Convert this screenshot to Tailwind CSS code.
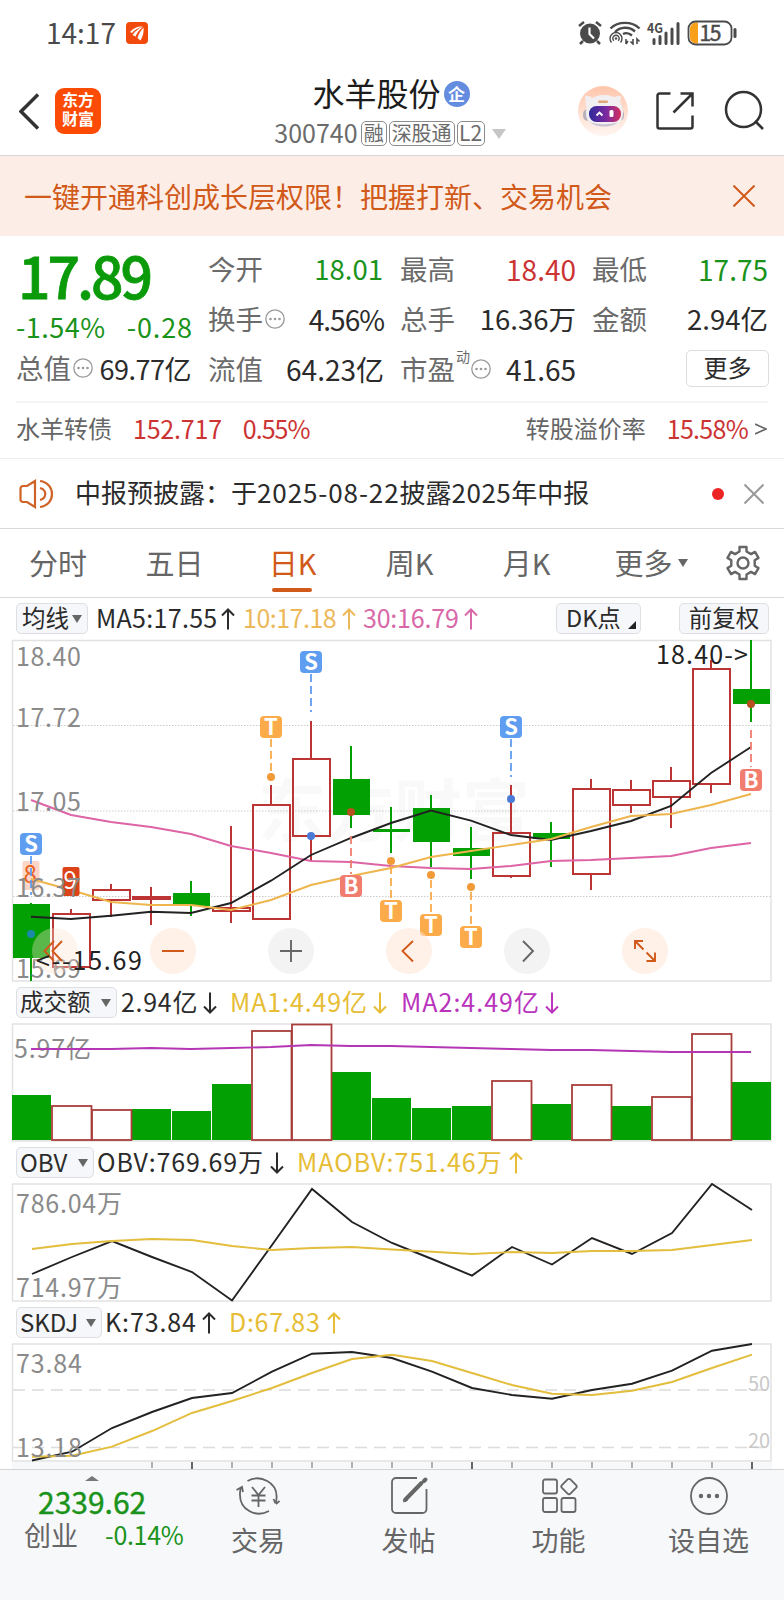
<!DOCTYPE html>
<html lang="zh-CN">
<head>
    <meta charset="UTF-8">
    <meta name="viewport" content="width=device-width, initial-scale=1.0">
    <title>水羊股份 300740</title>
    <script src="https://cdn.jsdelivr.net/npm/@tailwindcss/browser@4"></script>
</head>
<body class="w-[784px] h-[1600px] overflow-hidden bg-white text-[#2b2b2b] leading-none font-['Noto_Sans_CJK_SC',sans-serif] whitespace-nowrap">

    <!-- Shared icons -->
    <svg class="hidden">
        <symbol id="up" viewBox="0 0 14 22"><path d="M7 21.5V1.5M1 7.5l6-6 6 6" fill="none" stroke="currentColor" stroke-width="2"/></symbol>
        <symbol id="down" viewBox="0 0 14 22"><path d="M7 .5v20M1 14.500l6 6 6-6" fill="none" stroke="currentColor" stroke-width="2"/></symbol>
        <symbol id="caret" viewBox="0 0 10 8"><path d="M0 0h10L5 8z" fill="currentColor"/></symbol>
        <symbol id="more" viewBox="0 0 20 20"><circle cx="10" cy="10" r="9.200" fill="none" stroke="currentColor" stroke-width="1.300"/><g fill="currentColor"><circle cx="5.500" cy="10" r="1.300"/><circle cx="10" cy="10" r="1.300"/><circle cx="14.500" cy="10" r="1.300"/></g></symbol>
    </svg>

    <!-- Status bar -->
    <div class="flex items-center h-[66px] pl-[46px] pr-[47px] text-[#4a4a4a]">
        <span class="text-[28px] -mt-[2px]">14:17</span>
        <svg class="w-[22px] h-[22px] ml-[10px]" viewBox="0 0 22 22">
            <rect width="22" height="22" rx="4" fill="#f24a0c"/>
            <path d="M4 10C7 6 12 4 17 4.500 12 6 8 8 6 11zM6.500 13C9 9 13 6 17 5 13 8 11 11 9.500 14.500zM11.500 16C12.500 12 15 8 17.500 5.500c.6 4-.5 9-3 13z" fill="#fff"/>
        </svg>
        <svg class="w-[24px] h-[24px] ml-auto" viewBox="0 0 24 24">
            <circle cx="12" cy="12.500" r="10" fill="currentColor"/>
            <path d="M1 5l5-4M23 5l-5-4M5 20l-3 3M19 20l3 3" stroke="currentColor" stroke-width="2.500"/>
            <path d="M11.500 6.500v6.500l4.500 4.500" fill="none" stroke="#fff" stroke-width="2.200"/>
        </svg>
        <svg class="w-[32px] h-[24px] ml-[7px]" viewBox="0 0 32 24" fill="none" stroke="currentColor">
            <path d="M1.500 7.500C9 0 23 0 30.500 7.500M6 11c5-5 14-6 20-.5M14 13c3-1.500 6-1 9 1.500" stroke-width="2.400"/>
            <path d="M2.500 21.500a6 6 0 1 1 9 0M4.800 19.800a3.200 3.200 0 1 1 4.400 0" stroke-width="1.400"/>
            <circle cx="7" cy="17.500" r="1.200" fill="currentColor" stroke="none"/>
            <path d="M17 18v5M19 20l-2 3M24 18v5l-2.500-2.500M28 23v-5l2.500 2.500" stroke-width="1.600"/>
        </svg>
        <svg class="w-[34px] h-[24px] ml-[6px] overflow-visible" viewBox="0 0 34 24" fill="none" stroke="currentColor">
            <text x="0" y="11.500" font-size="13" font-weight="700" fill="currentColor" stroke="none" textLength="16" lengthAdjust="spacingAndGlyphs">4G</text>
            <path d="M7 18.500v4M13 15.500v7M19 12v10.500M25 8v14.500M31 2.500v20" stroke-width="3" stroke-linecap="round"/>
        </svg>
        <svg class="w-[50px] h-[26px] ml-[6px] overflow-visible" viewBox="0 0 50 26">
            <path d="M9 2.500h2v21H9a6 6 0 0 1-6-6v-9a6 6 0 0 1 6-6z" fill="#f9a01b"/>
            <rect x="1.500" y="1.500" width="43" height="23" rx="7" fill="none" stroke="#4a4a4a" stroke-width="1.800"/>
            <path d="M48 9.500v7" stroke="#4a4a4a" stroke-width="3" stroke-linecap="round"/>
            <text x="12.500" y="20.500" font-size="21" fill="#4a4a4a" stroke="#4a4a4a" stroke-width=".5" textLength="22">15</text>
        </svg>
    </div>

    <!-- Header -->
    <header class="flex items-center h-[90px] border-b border-[#d6d6d6]">
        <svg class="w-[20px] h-[38px] ml-[19px]" viewBox="0 0 20 38"><path d="M19 2.500L2 19.500l17 17" fill="none" stroke="#333" stroke-width="3.500"/></svg>
        <div class="flex flex-col items-center justify-center w-[46px] h-[46px] ml-[16px] rounded-[9px] bg-[#fb4b05] text-white text-[16px] font-bold leading-[19px] pb-[3px]">
            <span>东方</span>
            <span>财富</span>
        </div>
        <div class="flex flex-col items-center ml-[174px] w-[232px] pt-[7px]">
            <div class="flex items-center h-[39px] text-[#1c1c1c]">
                <span class="text-[32px] -mt-[4px]">水羊股份</span>
                <span class="flex items-center justify-center w-[26px] h-[26px] ml-[3px] pb-[2px] rounded-full bg-[#648de0] text-white text-[17px] font-bold">企</span>
            </div>
            <div class="flex items-center h-[40px] -ml-[2px] text-[#6b6b6b]">
                <span class="text-[25px] -mt-[3px]">300740</span>
                <span class="flex items-center h-[25px] px-[2px] pb-[2px] ml-[3px] border border-[#8c8c8c] rounded-[5px] text-[20px]">融</span>
                <span class="flex items-center h-[25px] px-[2px] pb-[2px] ml-[2px] border border-[#8c8c8c] rounded-[5px] text-[20px]">深股通</span>
                <span class="flex items-center justify-center w-[28px] h-[25px] pb-[2px] ml-[2px] border border-[#8c8c8c] rounded-[5px] text-[21px]">L2</span>
                <svg class="w-[14px] h-[10px] ml-[7px] text-[#c6c6c6]"><path d="M0 0h14L7 10z" fill="currentColor"/></svg>
            </div>
        </div>
        <svg class="w-[50px] h-[50px] ml-[71px]" viewBox="0 0 50 50">
            <defs>
                <linearGradient id="botBg" x1="0" y1="0" x2="0" y2="1"><stop offset="0" stop-color="#ffc5aa"/><stop offset="1" stop-color="#fff6f2"/></linearGradient>
                <linearGradient id="visor"><stop offset="0" stop-color="#2d2a9a"/><stop offset=".55" stop-color="#7c2aa0"/><stop offset="1" stop-color="#d5305c"/></linearGradient>
            </defs>
            <circle cx="25" cy="25" r="25" fill="url(#botBg)"/>
            <path d="M7 10c4-1 7 1 9 4l-8 7zM43 10c-4-1-7 1-9 4l8 7z" fill="#f2eef0"/>
            <rect x="5" y="23" width="41" height="12" rx="5" fill="#b8b0ba"/>
            <path d="M26 9c13 0 19 8 19 18s-8 14-19 14S8 37 8 27s5-18 18-18z" fill="#f1eff2"/>
            <path d="M12 36c6 6 22 6 28 0-5 3-23 3-28 0z" fill="#c9c3ce"/>
            <rect x="20" y="14.500" width="10" height="2.500" rx="1.200" fill="#e0a678"/>
            <rect x="11" y="20" width="32" height="16" rx="7.500" fill="url(#visor)"/>
            <path d="M18.500 29.500l3-3 3 3" fill="none" stroke="#fff" stroke-width="1.800"/>
            <rect x="31.500" y="24" width="4" height="7" rx="1.500" fill="#fff"/>
        </svg>
        <svg class="w-[40px] h-[40px] ml-[27px]" viewBox="0 0 40 40" fill="none" stroke="#333" stroke-width="2.500">
            <path d="M15.500 2.500H4.500a2 2 0 0 0-2 2v31a2 2 0 0 0 2 2h31a2 2 0 0 0 2-2V24.500M25.500 2.500h12v13M37 3L18.500 21.500"/>
        </svg>
        <svg class="w-[42px] h-[42px] ml-[29px]" viewBox="0 0 42 42" fill="none" stroke="#333" stroke-width="2.500">
            <circle cx="19.500" cy="19.500" r="17.500"/><path d="M31 31l8 8"/>
        </svg>
    </header>

    <!-- Promo banner -->
    <div class="flex items-center justify-between h-[80px] pl-[24px] pr-[29px] bg-[#fceee6] text-[#d1591a]">
        <span class="text-[28px]">一键开通科创成长层权限！把握打新、交易机会</span>
        <svg class="w-[22px] h-[22px]" viewBox="0 0 22 22"><path d="M.5.5l21 21M21.500.5l-21 21" stroke="currentColor" stroke-width="2"/></svg>
    </div>

    <!-- Quote -->
    <section class="grid grid-cols-4 gap-x-4 mx-4 h-[167px] border-b-2 border-[#f4f4f4] text-[28px] text-[#2b2b2b]">
        <div class="flex flex-col">
            <span class="mt-[10px] h-[62px] pl-[2px] text-[57px] leading-[56px] tracking-[-3px] font-medium text-[#0a9a0a] [-webkit-text-stroke:0.800px]">17.89</span>
            <div class="flex justify-between items-center h-[36px] text-[27px] text-[#1a931a]">
                <span class="tracking-[0.500px]">-1.54%</span><span class="tracking-[0.900px] -mr-px">-0.28</span>
            </div>
            <div class="flex items-center h-[48px]">
                <span class="text-[27.500px] text-[#6b6b6b]">总值</span>
                <svg class="w-[20px] h-[20px] ml-[2px] text-[#999]"><use href="#more"/></svg>
                <span class="ml-auto mr-px text-[27px] tracking-[-0.500px]">69.77亿</span>
            </div>
        </div>
        <div class="flex flex-col pt-[8px]">
            <div class="flex justify-between items-center h-[50px]"><span class="text-[27.500px] text-[#6b6b6b]">今开</span><span class="mr-px text-[27.500px] text-[#1a931a]">18.01</span></div>
            <div class="flex items-center h-[50px]">
                <span class="text-[27.500px] text-[#6b6b6b]">换手</span>
                <svg class="w-[20px] h-[20px] ml-[2px] text-[#999]"><use href="#more"/></svg>
                <span class="ml-auto tracking-[-1px]">4.56%</span>
            </div>
            <div class="flex justify-between items-center h-[50px]"><span class="text-[27.500px] text-[#6b6b6b]">流值</span><span>64.23亿</span></div>
        </div>
        <div class="flex flex-col pt-[8px]">
            <div class="flex justify-between items-center h-[50px]"><span class="text-[27.500px] text-[#6b6b6b]">最高</span><span class="text-[#cc3333]">18.40</span></div>
            <div class="flex justify-between items-center h-[50px]"><span class="text-[27.500px] text-[#6b6b6b]">总手</span><span class="text-[27.500px]">16.36万</span></div>
            <div class="flex items-center h-[50px]">
                <span class="text-[27.500px] text-[#6b6b6b]">市盈</span>
                <span class="text-[14px] text-[#6b6b6b] ml-px -mt-[26px]">动</span>
                <svg class="w-[20px] h-[20px] ml-px text-[#999]"><use href="#more"/></svg>
                <span class="ml-auto">41.65</span>
            </div>
        </div>
        <div class="flex flex-col pt-[8px]">
            <div class="flex justify-between items-center h-[50px]"><span class="text-[27.500px] text-[#6b6b6b]">最低</span><span class="text-[#1a931a]">17.75</span></div>
            <div class="flex justify-between items-center h-[50px]"><span class="text-[27.500px] text-[#6b6b6b]">金额</span><span class="text-[27.500px]">2.94亿</span></div>
            <div class="flex justify-end items-center h-[48px]">
                <span class="flex items-center justify-center w-[83px] h-[37px] pb-[3px] -mr-px border border-[#ddd] rounded-[5px] text-[24px]">更多</span>
            </div>
        </div>
    </section>

    <!-- Convertible bond -->
    <div class="flex items-center h-[56px] px-4 pb-[5px] border-b border-[#ececec] text-[24px] text-[#666]">
        <span>水羊转债</span>
        <span class="ml-[21px] text-[25px] tracking-[-0.200px] text-[#cc3333]">152.717</span>
        <span class="ml-[21px] text-[25px] tracking-[-1px] text-[#cc3333]">0.55%</span>
        <span class="ml-auto">转股溢价率</span>
        <span class="ml-[21px] text-[25px] tracking-[-0.700px] text-[#cc3333]">15.58%</span>
        <svg class="w-[12px] h-[12px] ml-[7px] mr-px mt-[2px]" viewBox="0 0 12 12"><path d="M0 1l11 5-11 5" fill="none" stroke="currentColor" stroke-width="1.600"/></svg>
    </div>

    <!-- Announcement -->
    <div class="flex items-center h-[70px] pl-[19px] pr-[20px] border-b border-[#d9d9d9]">
        <svg class="w-[36px] h-[30px]" viewBox="0 0 36 30" fill="none" stroke="#cf6227" stroke-width="2.200">
            <path d="M16 2v26l-8-5H4a2.500 2.500 0 0 1-2.500-2.500v-11A2.500 2.500 0 0 1 4 7h4zM21 9c7 2 7 10 0 12M21 2c16 2 16 24 0 26"/>
        </svg>
        <span class="ml-[20px] -mt-[4px] text-[26px]">中报预披露：于<span class="tracking-[0.900px]">2025-08-22</span>披露<span class="tracking-[0.500px]">2025</span>年中报</span>
        <span class="ml-auto w-[12px] h-[12px] rounded-full bg-[#ec2424]"></span>
        <svg class="w-[20px] h-[20px] ml-[20px]" viewBox="0 0 20 20"><path d="M.5.5l19 19M19.500.5l-19 19" stroke="#999" stroke-width="2"/></svg>
    </div>

    <!-- Period tabs -->
    <nav class="flex items-center h-[69px] border-b border-[#d9d9d9] text-[29px] text-[#666]">
        <span class="w-[116px] pb-px text-center">分时</span>
        <span class="w-[117px] pb-px text-center">五日</span>
        <span class="relative w-[119px] pb-px text-center text-[#d1591a]">日K<i class="absolute left-[39px] top-[40px] w-[40px] h-[4px] rounded-full bg-[#d1591a]"></i></span>
        <span class="w-[115px] pb-px text-center">周K</span>
        <span class="w-[119px] pb-px text-center">月K</span>
        <span class="flex items-center justify-center w-[130px] pb-px">更多<svg class="w-[10px] h-[8px] ml-[5px]"><use href="#caret"/></svg></span>
        <svg class="w-[36px] h-[36px] ml-[9px]" viewBox="0 0 36 36" fill="none" stroke="currentColor" stroke-width="2.400" stroke-linejoin="round">
            <path d="M14.500 2h7v4.500l4.500 2.600 4-2.200 3.500 6-3.800 2.300v5.600l3.800 2.300-3.500 6-4-2.200-4.500 2.600V34h-7v-4.500L10 26.900l-4 2.200-3.500-6 3.800-2.300v-5.600l-3.800-2.300 3.500-6 4 2.200 4.500-2.600z"/>
            <circle cx="18" cy="18" r="5.500"/>
        </svg>
    </nav>

    <!-- K line -->
    <div class="flex items-center h-[41px] px-4 text-[25px]">
        <span class="flex items-center justify-between w-[72px] h-[31px] pl-[5px] pr-[5px] pb-[2px] border border-[#dedfe2] rounded-[5px] bg-[#f6f7fa] text-[23.500px] mr-[8px]">均线<svg class="w-[10px] h-[8px] mt-[3px] text-[#666]"><use href="#caret"/></svg></span>
        <span class="w-[125px] -mt-[3px] tracking-[0.300px]">MA5:17.55</span><svg class="w-[14px] h-[22px] mr-[8px]"><use href="#up"/></svg>
        <span class="w-[99px] -mt-[3px] tracking-[-0.500px] text-[#ecb95a]">10:17.18</span><svg class="w-[14px] h-[22px] mr-[7px] text-[#ecb95a]"><use href="#up"/></svg>
        <span class="w-[101px] -mt-[3px] tracking-[-0.200px] text-[#d868a8]">30:16.79</span><svg class="w-[14px] h-[22px] text-[#d868a8]"><use href="#up"/></svg>
        <span class="relative flex items-center w-[85px] h-[31px] pl-[9px] pb-[2px] ml-auto border border-[#dedfe2] rounded-[5px] bg-[#f6f7fa] text-[23.500px]">DK点<svg class="absolute right-[4px] bottom-[4px] w-[8px] h-[8px]"><path d="M8 0v8H0z" fill="#222"/></svg></span>
        <span class="flex items-center justify-center w-[90px] h-[31px] pb-[2px] ml-[38px] -mr-px border border-[#dedfe2] rounded-[5px] bg-[#f6f7fa] text-[23.500px]">前复权</span>
    </div>
    <svg id="kline" class="block w-[784px] h-[343px] overflow-visible" viewBox="0 639 784 343"></svg>

    <!-- Turnover -->
    <div class="flex items-center h-[41px] px-4 text-[25px]">
        <span class="flex items-center justify-between w-[101px] h-[31px] pl-[3px] pr-[5px] pb-[2px] border border-[#dedfe2] rounded-[5px] bg-[#f6f7fa] text-[23.500px] mr-[4px]">成交额<svg class="w-[10px] h-[8px] mt-[2px] text-[#666]"><use href="#caret"/></svg></span>
        <span class="w-[82px] -mt-[3px] tracking-[0.700px]">2.94亿</span><svg class="w-[14px] h-[22px] mr-[13px]"><use href="#down"/></svg>
        <span class="w-[143px] -mt-[3px] tracking-[0.900px] text-[#e6bd34]">MA1:4.49亿</span><svg class="w-[14px] h-[22px] mr-[14px] text-[#e6bd34]"><use href="#down"/></svg>
        <span class="w-[144px] -mt-[3px] tracking-[1px] text-[#b933bd]">MA2:4.49亿</span><svg class="w-[14px] h-[22px] text-[#b933bd]"><use href="#down"/></svg>
    </div>
    <svg id="volume" class="block w-[784px] h-[119px]" viewBox="0 1023 784 119"></svg>

    <!-- OBV -->
    <div class="flex items-center h-[41px] px-4 text-[25px]">
        <span class="flex items-center justify-between w-[78px] h-[31px] pl-[3px] pr-[5px] pb-[2px] border border-[#dedfe2] rounded-[5px] bg-[#f6f7fa] text-[24px] mr-[3px]">OBV<svg class="w-[10px] h-[8px] mt-[2px] text-[#666]"><use href="#caret"/></svg></span>
        <span class="w-[173px] -mt-[3px] tracking-[0.850px]">OBV:769.69万</span><svg class="w-[14px] h-[22px] mr-[13px]"><use href="#down"/></svg>
        <span class="w-[212px] -mt-[3px] tracking-[1px] text-[#e6bd34]">MAOBV:751.46万</span><svg class="w-[14px] h-[22px] text-[#e6bd34]"><use href="#up"/></svg>
    </div>
    <svg id="obv" class="block w-[784px] h-[119px]" viewBox="0 1183 784 119"></svg>

    <!-- SKDJ -->
    <div class="flex items-center h-[41px] px-4 text-[25px]">
        <span class="flex items-center justify-between w-[86px] h-[31px] pl-[3px] pr-[5px] pb-[2px] border border-[#dedfe2] rounded-[5px] bg-[#f6f7fa] text-[24px] mr-[3px]">SKDJ<svg class="w-[10px] h-[8px] mt-[2px] text-[#666]"><use href="#caret"/></svg></span>
        <span class="w-[97px] -mt-[3px] tracking-[0.900px]">K:73.84</span><svg class="w-[14px] h-[22px] mr-[13px]"><use href="#up"/></svg>
        <span class="w-[98px] -mt-[3px] tracking-[0.700px] text-[#e6bd34]">D:67.83</span><svg class="w-[14px] h-[22px] text-[#e6bd34]"><use href="#up"/></svg>
    </div>
    <svg id="skdj" class="block w-[784px] h-[126px]" viewBox="0 1343 784 126"></svg>

    <!-- Bottom bar -->
    <footer class="flex h-[131px] border-t border-[#d4d4d4] bg-[#f7f8fa] text-[27px] text-[#666]">
        <div class="w-[183px] pt-[6px]">
            <svg class="w-[14px] h-[5px] ml-[85px]"><path d="M0 5h14L7 0z" fill="#777"/></svg>
            <div class="mt-[5px] pl-[38px] text-[30px] text-[#1a931a] [-webkit-text-stroke:0.400px]">2339.62</div>
            <div class="flex items-center mt-[5px] pl-[24px]">创业<span class="ml-[27px] text-[25px] tracking-[-0.300px] text-[#1a931a]">-0.14%</span></div>
        </div>
        <div class="flex flex-col items-center w-[150px] pt-[5px]">
            <svg class="w-[44px] h-[42px]" viewBox="0 0 44 42" fill="none" stroke="currentColor" stroke-width="1.800">
                <path d="M11.500 6C24-1 42 7 40.500 23.500l-.5 4M40 29l3.500-3M39.500 28.500L37.500 24M33 36C20 43 3 35 4 18l.5-4.500M.5 15l5.500-3 1 5"/>
                <path d="M16 12l6.500 8 6.500-8M22.500 20v12M15.500 20.500h14M15.500 25.500h14"/>
            </svg>
            <span class="mt-[9px]">交易</span>
        </div>
        <div class="flex flex-col items-center w-[150px] pt-[5px] pl-px">
            <svg class="w-[40px] h-[42px]" viewBox="0 0 40 42" fill="none" stroke="currentColor" stroke-width="1.800">
                <path d="M28 3H7a4 4 0 0 0-4 4v27a4 4 0 0 0 4 4h26.500a4 4 0 0 0 4-4V14"/>
                <path d="M16 25l16.500-17M35 6l1.500-1.500" stroke-width="4" stroke-linecap="round"/><path d="M14 27.500l2-5 3 3z" fill="currentColor" stroke="none"/>
            </svg>
            <span class="mt-[9px]">发帖</span>
        </div>
        <div class="flex flex-col items-center w-[150px] pt-[5px] pl-px">
            <svg class="w-[40px] h-[42px]" viewBox="0 0 40 42" fill="none" stroke="currentColor" stroke-width="1.800">
                <rect x="4" y="4.500" width="14" height="14" rx="2"/><rect x="4" y="23" width="14" height="14" rx="2"/><rect x="22.500" y="23" width="14" height="14" rx="2"/>
                <rect x="24" y="5.500" width="12" height="12" rx="2" transform="rotate(45 30 11.500)"/>
            </svg>
            <span class="mt-[9px]">功能</span>
        </div>
        <div class="flex flex-col items-center w-[150px] pt-[5px] pl-px">
            <svg class="w-[40px] h-[42px]" viewBox="0 0 40 42" fill="none" stroke="currentColor" stroke-width="1.800">
                <circle cx="20" cy="21" r="18"/>
                <g fill="currentColor" stroke="none"><circle cx="12" cy="21" r="2.200"/><circle cx="20" cy="21" r="2.200"/><circle cx="28" cy="21" r="2.200"/></g>
            </svg>
            <span class="mt-[9px]">设自选</span>
        </div>
    </footer>

    <script>
        const RED = '#bd3434', GREEN = '#02a002', GRAY = '#8a8a8a', YELLOW = '#e3bd3c';

        const line = (ys, x0, color) =>
            `<polyline points="${ys.map((y, i) => `${x0 + i * 40},${y}`).join(' ')}" fill="none" stroke="${color}" stroke-width="1.900"/>`;
        const frame = (y1, y2) =>
            `<rect x="12.500" y="${y1}" width="758.500" height="${y2 - y1}" fill="none" stroke="#e2e2e2" stroke-width="1.500"/>`;
        const label = (x, y, w, text, color = GRAY, size = 25) =>
            `<text x="${x}" y="${y}" textLength="${w}" font-size="${size}" fill="${color}">${text}</text>`;

        // Candles: up?, high, body top, body bottom, low
        const candles = [
            [0, 903, 904, 958, 981], [1, 909, 914, 967, 967], [1, 884, 890, 900, 917], [1, 887, 897, 899, 925],
            [0, 881, 893, 906, 916], [1, 826, 908, 911, 923], [1, 785, 805, 919, 919], [1, 721, 759, 836, 861],
            [0, 746, 779, 815, 828], [0, 807, 829, 832, 853], [0, 795, 808, 842, 867], [0, 827, 848, 856, 879],
            [1, 785, 833, 876, 878], [0, 822, 833, 839, 867], [1, 779, 789, 874, 890], [1, 780, 790, 805, 813],
            [1, 767, 781, 797, 828], [1, 660, 669, 784, 793], [0, 640, 689, 704, 722]
        ];
        const marks = [
            // letter, x, box centre, dash from, dash to, dot, colour
            ['S', 31, 844, 856, 895, 934, '#5f9df0'], ['T', 271, 727, 739, 773, 777, '#fbab4a'],
            ['S', 311, 662, 674, 712, 836, '#5f9df0'], ['B', 351, 886, 836, 874, 812, '#f07d6e'],
            ['T', 391, 911, 866, 899, 861, '#fbab4a'], ['T', 431, 925, 880, 913, 875, '#fbab4a'],
            ['T', 471, 937, 892, 925, 887, '#fbab4a'], ['S', 511, 727, 739, 777, 799, '#5f9df0'],
            ['B', 751, 780, 730, 767, 704, '#f07d6e']
        ];
        const dots = { S: '#4a7ad6', T: '#f29a38', B: '#b5501f' };

        let k = frame(640.5, 981);
        k += '<text x="258" y="836" font-size="68" font-weight="700" textLength="272" fill="#f9f9f9">东方财富</text>';
        [725.5, 811, 896.5].forEach(y => k += `<path d="M13 ${y}H771" stroke="#ccc" stroke-dasharray="1.500 1.500"/>`);
        candles.forEach(([up, high, top, bottom, low], i) => {
            const x = 31 + i * 40;
            if (up) {
                k += `<path d="M${x} ${high}V${top}M${x} ${bottom}V${low}" stroke="${RED}" stroke-width="2"/>`;
                k += `<rect x="${x - 18}" y="${top}" width="37" height="${bottom - top}" fill="none" stroke="${RED}" stroke-width="2"/>`;
            } else {
                k += `<path d="M${x} ${high}V${low}" stroke="${GREEN}" stroke-width="2"/>`;
                k += `<rect x="${x - 18}" y="${top}" width="37" height="${bottom - top}" fill="${GREEN}"/>`;
            }
        });
        k += '<path d="M132 898h38M151 887v38" stroke="#bd3434" stroke-width="2"/>';
        k += line([800, 815, 822, 827, 834, 846, 853, 861, 862, 866, 868, 869, 866, 861, 860, 858, 856, 848, 843], 31, '#dd64a5');
        k += line([916.7, 919, 915.7, 911.7, 913, 903, 880.7, 855, 838, 823, 810.5, 820.7, 835, 840, 831, 821, 806, 773, 747], 31, '#222');
        // nine-count
        k += '<rect x="22.500" y="861" width="17" height="29" rx="2" fill="#fbd5c6"/>' + label(23.5, 883, 15, '8', '#e8601c', 24);
        k += line([879, 890, 902, 905, 905, 910, 900, 885, 876, 868, 857, 851, 845, 839, 827, 816, 814, 805, 794], 31, '#edb54c');
        k += '<rect x="62.500" y="867" width="17" height="29" rx="2" fill="#dd4318"/>' + label(63.5, 889, 15, '9', '#fff', 24);
        marks.forEach(([t, x, y, d1, d2, dot, c], i) => {
            k += `<path d="M${x} ${d1}V${d2}" stroke="${c}" stroke-width="1.800" stroke-dasharray="8 4"/>`;
            k += `<circle cx="${x}" cy="${dot}" r="4" fill="${i ? dots[t] : '#1a8aa8'}"/>`;
            k += `<rect x="${x - 11}" y="${y - 11}" width="22" height="22" rx="4" fill="${c}"/>`;
            k += `<text x="${x}" y="${y + 8}" text-anchor="middle" font-family="Noto Sans CJK SC" font-size="22" font-weight="700" fill="#fff">${t}</text>`;
        });
        [['18.40', 666], ['17.72', 726.5], ['17.05', 811], ['16.37', 897], ['15.69', 978]].forEach(([t, y]) => k += label(16, y, 65, t));
        // floating controls
        [55, 173, 291, 409, 527, 645].forEach((x, i) =>
            k += `<circle cx="${x}" cy="951" r="23" fill="${i === 2 || i === 4 ? '#e8e8e8' : '#ffe1d2'}" fill-opacity="${i ? .5 : .35}"/>`);
        k += `<g fill="none" stroke="#d1591a" stroke-width="1.900">
            <path d="M54 941l-9.500 10 9.500 10M62 941l-9.500 10 9.500 10M162 951h22M413 941l-10.500 10 10.500 10.500"/>
            <path d="M635 949v-8h8M635 941l8.500 8.500M655 952.500v8.500h-8.500M655 961l-8.500-8.500"/></g>
            <path d="M280 951h22M291 940v22M523 941l10 10-10 10.500" fill="none" stroke="#666" stroke-width="1.900"/>`;
        k += label(36, 970, 106, '&lt;--15.69', '#222') + label(656, 664, 92, '18.40-&gt;', '#222');
        document.getElementById('kline').innerHTML = k;

        // Turnover bars: up?, top
        const bars = [[0, 1095], [1, 1106], [1, 1110], [0, 1109], [0, 1111], [0, 1084], [1, 1031], [1, 1024.5], [0, 1072], [0, 1098],
            [0, 1108], [0, 1106], [1, 1081], [0, 1104], [1, 1085], [0, 1106], [1, 1097], [1, 1034], [0, 1082]];
        let v = frame(1024, 1141) + label(14, 1057.5, 77, '5.97亿');
        bars.forEach(([up, top], i) => {
            const x = 12 + i * 40;
            if (!up) v += `<rect x="${x}" y="${top}" width="39" height="${1140 - top}" fill="${GREEN}"/>`;
        });
        bars.forEach(([up, top], i) => {
            const x = 12 + i * 40;
            if (up) v += `<rect x="${x}" y="${top}" width="39.500" height="${1140 - top}" fill="none" stroke="#a83f3c" stroke-width="1.800"/>`;
        });
        v += line([1049, 1049, 1049, 1048, 1049, 1048, 1047, 1045, 1046, 1046, 1047, 1048, 1049, 1050, 1050, 1051, 1052, 1052, 1052], 31, '#b436b4');
        document.getElementById('volume').innerHTML = v;

        document.getElementById('obv').innerHTML = frame(1184, 1301)
            + label(16, 1213, 106, '786.04万') + label(16, 1297, 106, '714.97万')
            + line([1274, 1257, 1241, 1257, 1272, 1300.5, 1245, 1189, 1222, 1243, 1259, 1275.6, 1247, 1264.5, 1238, 1254, 1233, 1184, 1210], 32, '#222')
            + line([1249, 1244, 1241, 1239, 1240, 1246, 1250, 1248, 1247, 1249.5, 1251.7, 1254, 1252, 1253, 1251, 1251, 1250, 1245, 1240], 32, YELLOW);

        let s = '<rect x="12" y="1462" width="760" height="7" fill="#f7f8fa"/>' + frame(1344, 1461);
        s += '<path d="M13 1390H771M13 1447.500H771" stroke="#dcdcdc" stroke-width="1.500" stroke-dasharray="12 7"/>';
        for (let i = 3; i < 19; i++) {
            const major = i === 4 || i === 11 || i === 18;
            s += `<path d="M${32 + i * 40} 1462v${major ? 7 : 6}" stroke="${major ? '#555' : '#aaa'}" stroke-width="1.800"/>`;
        }
        s += label(748, 1390.5, 22, '50', '#c8c8c8', 20) + label(748, 1448, 22, '20', '#c8c8c8', 20);
        s += line([1460.5, 1451.7, 1428, 1412, 1398, 1393, 1371.7, 1353.7, 1352, 1358, 1371.7, 1388, 1395, 1398.7, 1390, 1383.7, 1370.7, 1350.7, 1344], 32, '#222')
            + line([1456.7, 1455.7, 1446.7, 1431, 1413, 1401, 1388, 1373, 1359, 1354.7, 1361, 1373, 1385, 1393.7, 1395, 1390.7, 1382, 1368, 1354.7], 32, YELLOW)
            + label(16, 1373, 66, '73.84') + label(16, 1457, 66, '13.18');
        document.getElementById('skdj').innerHTML = s;
    </script>
</body>
</html>
